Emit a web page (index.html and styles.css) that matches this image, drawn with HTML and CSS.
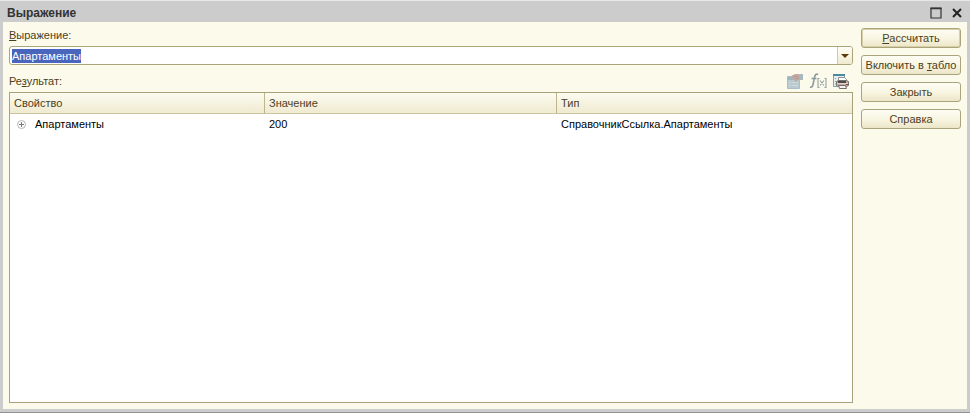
FILE: index.html
```html
<!DOCTYPE html>
<html lang="ru">
<head>
<meta charset="utf-8">
<title>Выражение</title>
<link rel="stylesheet" href="styles.css">
</head>
<body>
<div class="window">
  <header class="titlebar">
    <h1 class="title">Выражение</h1>
    <button class="win-button" type="button" aria-label="Развернуть">
      <svg width="12" height="12" viewBox="0 0 12 12"><path d="M1 1h10v10H1z" fill="none" stroke="#333" stroke-width="1.200"/><path d="M0.500 1.500h11" stroke="#333" stroke-width="1.500"/></svg>
    </button>
    <button class="win-button" type="button" aria-label="Закрыть окно">
      <svg width="12" height="12" viewBox="0 0 12 12"><path d="M2 2l8 8M10 2l-8 8" fill="none" stroke="#222" stroke-width="2"/></svg>
    </button>
  </header>
  <main class="content">
    <section class="main-column">
      <label class="caption" for="expression"><u>В</u>ыражение:</label>
      <div class="combo">
        <input class="combo-input" id="expression" type="text" value="Апартаменты" spellcheck="false" autocomplete="off">
        <button class="combo-button" type="button" aria-label="Выбрать из списка">
          <svg width="8" height="4" viewBox="0 0 8 4"><path d="M0 0h8L4 4z" fill="#5b3a0c"/></svg>
        </button>
      </div>
      <div class="result-bar">
        <span id="result-label">Ре<u>з</u>ультат:</span>
        <div class="tools">
          <button class="tool" type="button" aria-label="Открыть значение" disabled>
            <svg width="16" height="16" viewBox="0 0 16 16"><path d="M0.500 3.500h12v12h-12z" fill="#b9cbd1" stroke="#abbec5"/><path d="M1 4h11v3H1z" fill="#9fb5be"/><path d="M2 9.500h2M5 9.500h6M2 12.500h2M5 12.500h6" stroke="#cfdbdb"/><path d="M5 2.500L8 1h4l2 1v4l-3 1-2 2H7.500L8 6.500 5 6 4 4z" fill="#c3aaa5"/><path d="M6 3.500h5M8 5.500h4" stroke="#b59a94"/><path d="M13 1h3v6h-3z" fill="#aab8bf"/></svg>
          </button>
          <button class="tool" type="button" aria-label="Функция" disabled>
            <svg width="18" height="16" viewBox="0 0 18 16" fill="none" stroke="#94a3a6"><path d="M9 1.500C7 0.500 6 2 5.500 4.500L4 11.500C3.500 14 2.500 14.500 1 14M2.500 5.500h5" stroke="#8c9ba0" stroke-width="1.600"/><path d="M10.500 5.500h-1.500v9h1.500M15.500 5.500h1.500v9h-1.500M11 7.500l4 5M15 7.500l-4 5" stroke-width="1.100"/></svg>
          </button>
          <button class="tool" type="button" aria-label="Печать">
            <svg width="16" height="16" viewBox="0 0 16 16"><path d="M0.500 1.500h11v12h-11z" fill="#e4eef1" stroke="#7ca4b6"/><path d="M0 1h12v2H0z" fill="#4f86a1"/><path d="M2 5.500h1M2 8.500h1M2 11h1" stroke="#7fa6b5"/><path d="M5.500 4.500h6l2 2v2h-8z" fill="#fff" stroke="#94918e"/><path d="M3.500 8.500l2-1h8l2 1v4l-2 1h-9l-1-1z" fill="#bcaeaa" stroke="#7b706d"/><path d="M5 8h8v2H5z" fill="#4f484a"/><path d="M4 10.500h11" stroke="#ded4ce"/><path d="M5.500 12.500h7l1 3h-7z" fill="#f5f1ed" stroke="#776b69"/><path d="M13 11h2v1h-2z" fill="#a44132"/></svg>
          </button>
        </div>
      </div>
      <div class="grid-box">
        <table class="grid" aria-labelledby="result-label">
          <colgroup><col class="col-property"><col class="col-value"><col></colgroup>
          <thead><tr><th scope="col">Свойство</th><th scope="col">Значение</th><th scope="col">Тип</th></tr></thead>
          <tbody>
            <tr>
              <td><div class="node"><button class="expander" type="button" aria-label="Развернуть строку"><svg width="9" height="9" viewBox="0 0 9 9" fill="none"><circle cx="4.500" cy="4.500" r="4" stroke="#b4b4b4"/><path d="M2 4.500h5M4.500 2v5" stroke="#777"/></svg></button>Апартаменты</div></td>
              <td>200</td>
              <td>СправочникСсылка.Апартаменты</td>
            </tr>
          </tbody>
        </table>
      </div>
    </section>
    <nav class="actions" aria-label="Действия">
      <button class="action action-default" type="button"><u>Р</u>ассчитать</button>
      <button class="action" type="button">Включить в <u>т</u>абло</button>
      <button class="action" type="button">Закрыть</button>
      <button class="action" type="button">Справка</button>
    </nav>
  </main>
</div>
<script src="script.js"></script>
</body>
</html>
```
FILE: styles.css
```css
* { box-sizing: border-box; }

body {
  margin: 0;
  font: 11px/14px "Liberation Sans", Arial, sans-serif;
  color: #4d3e1c;
}

button, input { font: inherit; color: inherit; }

button {
  display: flex;
  align-items: center;
  justify-content: center;
  padding: 0;
  border: 0;
  background: none;
}

svg { display: block; }

.window {
  display: flex;
  flex-direction: column;
  min-height: 100vh;
  padding: 0 3px 3px;
  background: #ccc;
  border-top: 1px solid #e8e8e8;
  border-bottom: 1px solid #929292;
}

.titlebar {
  display: flex;
  align-items: center;
  gap: 9px;
  height: 21px;
  padding: 2px 4px 0;
}

.title {
  flex: 1;
  margin: 0;
  font-size: 12px;
  line-height: 14px;
  color: #333;
}

.content {
  flex: 1;
  display: flex;
  gap: 8px;
  padding: 6px;
  background: #fcfaeb;
}

.main-column {
  flex: 1;
  min-width: 0;
  display: flex;
  flex-direction: column;
}

.caption { margin-bottom: 4px; }

.combo {
  display: flex;
  height: 19px;
  border: 1px solid #aaa47c;
  border-radius: 3px;
  background: #fff;
  overflow: hidden;
}

.combo-input {
  flex: 1;
  min-width: 0;
  padding: 0 2px;
  border: 0;
  outline: 0;
  background: transparent;
  caret-color: transparent;
}

.combo-input::selection { background: #4a66bc; color: #fff; }

.combo-button {
  width: 15px;
  border-left: 1px solid #cfc9a4;
  background: linear-gradient(#fffef5, #f0ebcf);
}

.result-bar {
  display: flex;
  align-items: center;
  justify-content: space-between;
  height: 27px;
  padding: 4px 4px 0 0;
}

.tools { display: flex; gap: 6px; }

.grid-box {
  flex: 1;
  border: 1px solid #a8a27b;
  background: #fff;
}

.grid {
  width: 100%;
  table-layout: fixed;
  border-collapse: separate;
  border-spacing: 0;
}

.col-property { width: 255px; }
.col-value { width: 292px; }

.grid th {
  height: 21px;
  padding: 0 4px;
  border-right: 1px solid #bdb68d;
  border-bottom: 1px solid #cbc49c;
  background: linear-gradient(#fcfbf0, #efead0);
  font-weight: normal;
  text-align: left;
}

.grid th:last-child { border-right: 0; }

.grid td {
  height: 20px;
  padding: 0 4px;
  color: #000;
}

.node { display: flex; align-items: center; gap: 9px; padding-left: 3px; }

.actions {
  flex: 0 0 100px;
  display: flex;
  flex-direction: column;
  gap: 7px;
}

.action {
  display: block;
  height: 20px;
  border: 1px solid #aaa47e;
  border-radius: 3px;
  background: linear-gradient(#fefdf5, #f8f5e2 50%, #ece6c8);
  white-space: nowrap;
}

.action-default { box-shadow: inset 0 0 0 1px #d8d0a4; }
```
FILE: script.js
```js
const expression = document.getElementById("expression");
expression.focus();
expression.select();
```
